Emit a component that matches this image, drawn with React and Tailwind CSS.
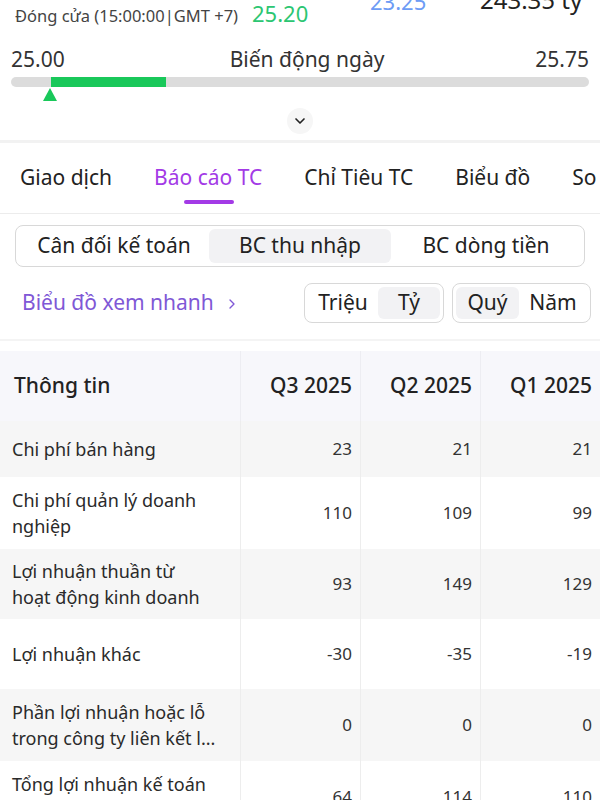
import { ChevronDown, ChevronRight } from 'lucide-react';

// Báo cáo tài chính — BC thu nhập (quý, đơn vị tỷ)
const rows = [
  { name: 'Chi phí bán hàng', v: ['23', '21', '21'], h: 'h-[56px]', pr: 'pr-[28px]' },
  { name: 'Chi phí quản lý doanh nghiệp', v: ['110', '109', '99'], h: 'h-[72px]', pr: 'pr-[28px]' },
  { name: 'Lợi nhuận thuần từ hoạt động kinh doanh', v: ['93', '149', '129'], h: 'h-[70px]', pr: 'pr-[28px]' },
  { name: 'Lợi nhuận khác', v: ['-30', '-35', '-19'], h: 'h-[70px]', pr: 'pr-[28px]' },
  { name: 'Phần lợi nhuận hoặc lỗ trong công ty liên kết l...', v: ['0', '0', '0'], h: 'h-[72px]', pr: 'pr-[18px]' },
  { name: 'Tổng lợi nhuận kế toán trước thuế', v: ['64', '114', '110'], h: 'h-[72px]', pr: 'pr-[28px]' },
];

const tabs = ['Giao dịch', 'Báo cáo TC', 'Chỉ Tiêu TC', 'Biểu đồ', 'So sánh'];

export default function App() {
  return (
    <div className="h-[800px] w-[600px] overflow-hidden bg-white text-[#222] font-['Noto_Sans',sans-serif]">
      {/* header price row (cut by the viewport) */}
      <div className="flex h-[30px] overflow-hidden whitespace-nowrap">
        <div className="flex w-[370px] items-end pl-[15px]">
          <span className="mb-[3px] text-[16.5px] leading-[22px] text-[#444]">Đóng cửa (15:00:00|GMT +7)</span>
          <span className="mb-[4px] ml-[14px] text-[22px] leading-[26px] text-[#2cc672]">25.20</span>
        </div>
        <div className="w-[110px] -mt-[12px] text-[22px] leading-[26px] text-[#6d9cf5]">23.25</div>
        <div className="-mt-[14px] text-[24px] leading-[28px] text-[#222]">243.35 tỷ</div>
      </div>

      {/* day range */}
      <div className="px-[11px] pt-[15px]">
        <div className="flex items-center justify-between text-[21px] leading-[28px] text-[#333]">
          <span>25.00</span>
          <span className="pl-[14px]">Biến động ngày</span>
          <span>25.75</span>
        </div>
        <div className="relative mt-[4px] h-[10px] rounded-full bg-[#dcdcdc]">
          <div className="absolute left-[40px] top-0 h-[10px] w-[115px] bg-[#19c85a]" />
          <div className="absolute left-[32px] top-[11px] h-0 w-0 border-x-[7px] border-b-[13px] border-x-transparent border-b-[#19c85a]" />
        </div>
        <div className="flex justify-center pt-[21px] pb-[6px]">
          <div className="grid h-[26px] w-[26px] place-items-center rounded-full bg-[#f6f6f6]">
            <ChevronDown size={16} strokeWidth={2.5} className="text-[#222]" />
          </div>
        </div>
      </div>
      <div className="h-[3px] bg-[#f2f2f2]" />

      {/* tabs */}
      <div className="flex h-[70px] items-center gap-[42px] whitespace-nowrap pl-[20px] text-[21px]">
        {tabs.map((t, i) => (
          <div key={t} className="relative">
            <span className={i === 1 ? 'text-[#a33ae6]' : 'text-[#222]'}>{t}</span>
            {i === 1 ? (
              <div className="absolute left-[30px] top-[38px] h-[4px] w-[50px] rounded-full bg-[#a33ae6]" />
            ) : null}
          </div>
        ))}
      </div>
      <div className="h-[1px] bg-[#ececec]" />

      {/* report type */}
      <div className="px-[15px] pt-[11px]">
        <div className="flex h-[42px] items-center rounded-[8px] border border-[#d8d8d8] px-[3px] text-[21px]">
          <div className="flex h-[34px] w-[190px] items-center justify-center">Cân đối kế toán</div>
          <div className="flex h-[34px] w-[182px] items-center justify-center rounded-[6px] bg-[#f2f2f4]">BC thu nhập</div>
          <div className="flex h-[34px] flex-1 items-center justify-center">BC dòng tiền</div>
        </div>
      </div>

      <div className="flex items-center pl-[22px] pr-[9px] pt-[16px]">
        <div className="flex flex-1 items-center whitespace-nowrap text-[21px] text-[#8058d6]">
          Biểu đồ xem nhanh
          <ChevronRight size={16} strokeWidth={2} className="ml-[10px] mt-[2px]" />
        </div>
        <div className="flex h-[40px] w-[140px] items-center rounded-[8px] border border-[#d8d8d8] px-[3px] text-[21px]">
          <div className="flex h-[32px] flex-1 items-center justify-center">Triệu</div>
          <div className="flex h-[32px] w-[62px] items-center justify-center rounded-[6px] bg-[#f2f2f4]">Tỷ</div>
        </div>
        <div className="ml-[8px] flex h-[40px] w-[139px] items-center rounded-[8px] border border-[#d8d8d8] px-[3px] text-[21px]">
          <div className="flex h-[32px] w-[63px] items-center justify-center rounded-[6px] bg-[#f2f2f4]">Quý</div>
          <div className="flex h-[32px] flex-1 items-center justify-center">Năm</div>
        </div>
      </div>
      <div className="mt-[16px] h-[2px] bg-[#f4f4f4]" />

      {/* table */}
      <div className="mt-[10px]">
        <div className="grid h-[70px] grid-cols-[240px_120px_120px_120px] bg-[#f7f7fb] text-[21px] font-medium">
          <div className="flex items-center pl-[14px]">Thông tin</div>
          {['Q3 2025', 'Q2 2025', 'Q1 2025'].map((q) => (
            <div key={q} className="flex items-center justify-end border-l border-[#ededf2] pr-[8px]">{q}</div>
          ))}
        </div>
        {rows.map((r, i) => (
          <div
            key={r.name}
            className={`grid grid-cols-[240px_120px_120px_120px] text-[18px] leading-[26px] ${r.h} ${
              i % 2 === 0 ? 'bg-[#f6f6f6]' : 'bg-white'
            }`}
          >
            <div className={`flex items-center pl-[12px] text-[#2a2a2a] ${r.pr}`}>{r.name}</div>
            {r.v.map((v, j) => (
              <div key={j} className="flex items-center justify-end border-l border-[#ededed] pr-[8px] text-[17px] text-[#333]">
                {v}
              </div>
            ))}
          </div>
        ))}
      </div>
    </div>
  );
}
